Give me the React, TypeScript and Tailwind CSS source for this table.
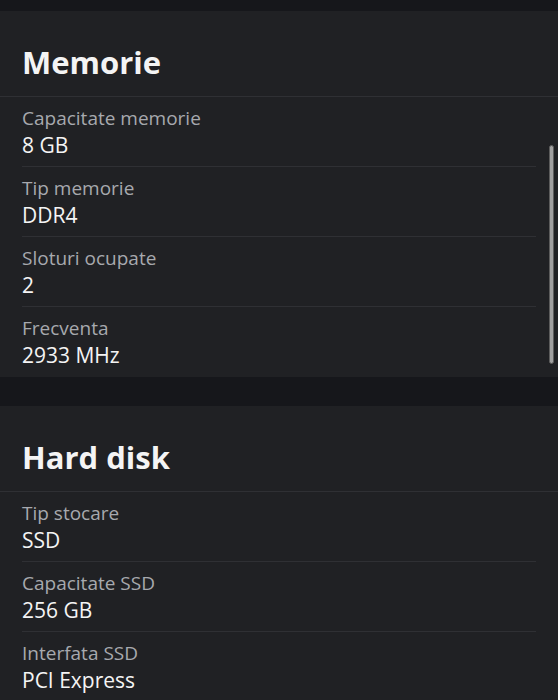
import React from "react";

type Row = { label: string; value: string };

const sections: { title: string; rows: Row[]; scroll?: boolean }[] = [
  {
    title: "Memorie",
    scroll: true,
    rows: [
      { label: "Capacitate memorie", value: "8 GB" },
      { label: "Tip memorie", value: "DDR4" },
      { label: "Sloturi ocupate", value: "2" },
      { label: "Frecventa", value: "2933 MHz" },
    ],
  },
  {
    title: "Hard disk",
    rows: [
      { label: "Tip stocare", value: "SSD" },
      { label: "Capacitate SSD", value: "256 GB" },
      { label: "Interfata SSD", value: "PCI Express" },
    ],
  },
];

function Section({ title, rows, scroll }: { title: string; rows: Row[]; scroll?: boolean }) {
  return (
    <section className="relative bg-[#202124]">
      <div className="border-b border-[#2f3034] pl-[22px] pt-[31px] pb-[14px]">
        <h2 className="text-[31px] leading-[40px] font-bold text-[#f4f4f4]">{title}</h2>
      </div>
      <div className="flex flex-col">
        {rows.map((r, i) => (
          <div key={r.label} className="px-[22px]">
            <div
              className={
                i < rows.length - 1
                  ? "flex flex-col pt-[8px] pb-[7px] border-b border-[#2f3034]"
                  : "flex flex-col pt-[8px] pb-[8px]"
              }
            >
              <span className="text-[19px] leading-[26px] text-[#a7a9ae]">{r.label}</span>
              <span className="text-[21px] leading-[28px] font-medium text-[#f4f4f4]">{r.value}</span>
            </div>
          </div>
        ))}
      </div>
      {scroll && (
        <div className="absolute right-[4px] top-[134px] h-[219px] w-[5px] rounded-full bg-[#a0a0a0] border border-[#5c5c5c]" />
      )}
    </section>
  );
}

export default function App() {
  return (
    <div
      className="w-[558px] h-[700px] overflow-hidden bg-[#16171b] pt-[11px] flex flex-col gap-[29px]"
      style={{ fontFamily: '"Open Sans", "Noto Sans", sans-serif' }}
    >
      {sections.map((s) => (
        <Section key={s.title} {...s} />
      ))}
    </div>
  );
}
